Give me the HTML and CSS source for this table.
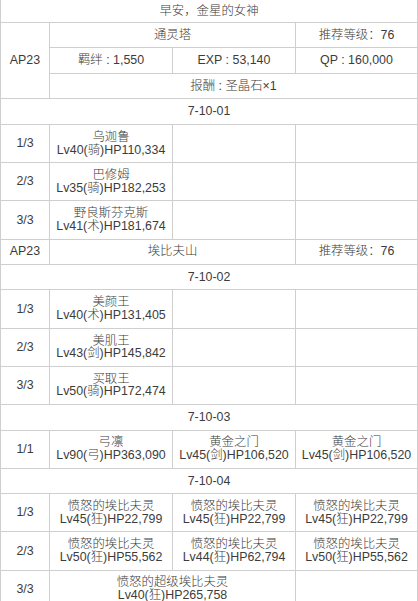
FILE: index.html
```html
<!DOCTYPE html>
<html lang="zh-CN">
<head>
<meta charset="utf-8">
<title>7-10 埃比夫山</title>
<link rel="stylesheet" href="styles.css">
</head>
<body>
<div class="sheet">
  <div class="c full title">早安，金星的女神</div>

  <div class="c rows3">AP23</div>
  <div class="c span2">通灵塔</div>
  <div class="c">推荐等级：76</div>
  <div class="c">羁绊 : 1,550</div>
  <div class="c">EXP : 53,140</div>
  <div class="c">QP : 160,000</div>
  <div class="c span3">报酬 : 圣晶石×1</div>

  <div class="c full">7-10-01</div>
  <div class="c">1/3</div>
  <div class="c"><span>乌迦鲁</span><span>Lv40(骑)HP110,334</span></div>
  <div class="c"></div>
  <div class="c"></div>
  <div class="c">2/3</div>
  <div class="c"><span>巴修姆</span><span>Lv35(骑)HP182,253</span></div>
  <div class="c"></div>
  <div class="c"></div>
  <div class="c">3/3</div>
  <div class="c"><span>野良斯芬克斯</span><span>Lv41(术)HP181,674</span></div>
  <div class="c"></div>
  <div class="c"></div>

  <div class="c">AP23</div>
  <div class="c span2">埃比夫山</div>
  <div class="c">推荐等级：76</div>

  <div class="c full">7-10-02</div>
  <div class="c">1/3</div>
  <div class="c"><span>美颜王</span><span>Lv40(术)HP131,405</span></div>
  <div class="c"></div>
  <div class="c"></div>
  <div class="c">2/3</div>
  <div class="c"><span>美肌王</span><span>Lv43(剑)HP145,842</span></div>
  <div class="c"></div>
  <div class="c"></div>
  <div class="c">3/3</div>
  <div class="c"><span>买取王</span><span>Lv50(骑)HP172,474</span></div>
  <div class="c"></div>
  <div class="c"></div>

  <div class="c full">7-10-03</div>
  <div class="c">1/1</div>
  <div class="c"><span>弓凛</span><span>Lv90(弓)HP363,090</span></div>
  <div class="c"><span>黄金之门</span><span>Lv45(剑)HP106,520</span></div>
  <div class="c"><span>黄金之门</span><span>Lv45(剑)HP106,520</span></div>

  <div class="c full">7-10-04</div>
  <div class="c">1/3</div>
  <div class="c"><span>愤怒的埃比夫灵</span><span>Lv45(狂)HP22,799</span></div>
  <div class="c"><span>愤怒的埃比夫灵</span><span>Lv45(狂)HP22,799</span></div>
  <div class="c"><span>愤怒的埃比夫灵</span><span>Lv45(狂)HP22,799</span></div>
  <div class="c">2/3</div>
  <div class="c"><span>愤怒的埃比夫灵</span><span>Lv50(狂)HP55,562</span></div>
  <div class="c"><span>愤怒的埃比夫灵</span><span>Lv44(狂)HP62,794</span></div>
  <div class="c"><span>愤怒的埃比夫灵</span><span>Lv50(狂)HP55,562</span></div>
  <div class="c">3/3</div>
  <div class="c span2"><span>愤怒的超级埃比夫灵</span><span>Lv40(狂)HP265,758</span></div>
  <div class="c"></div>
</div>
</body>
</html>
```
FILE: styles.css
```css
html, body {
  margin: 0;
  padding: 0;
  background: #ffffff;
}

body {
  font-family: "Liberation Sans", "Noto Sans CJK SC", sans-serif;
  font-size: 12.4px;
  font-weight: 300;
  color: #3c3c3c;
}

.sheet {
  display: grid;
  grid-template-columns: 48px 122px 122px 121px;
  gap: 1px;
  width: 418px;
  box-sizing: border-box;
  padding: 0 1px 1px;
  background: #cfcfcf;
}

.c {
  background: #ffffff;
  padding: 5.9px 2px;
  line-height: 12.7px;
  text-align: center;
  white-space: nowrap;
  display: flex;
  flex-direction: column;
  justify-content: center;
  align-items: center;
}

.title {
  padding-top: 4.8px;
  padding-bottom: 4.5px;
}

.full {
  grid-column: 1 / -1;
}

.span2 {
  grid-column: span 2;
}

.span3 {
  grid-column: span 3;
}

.rows3 {
  grid-row: span 3;
}
```
